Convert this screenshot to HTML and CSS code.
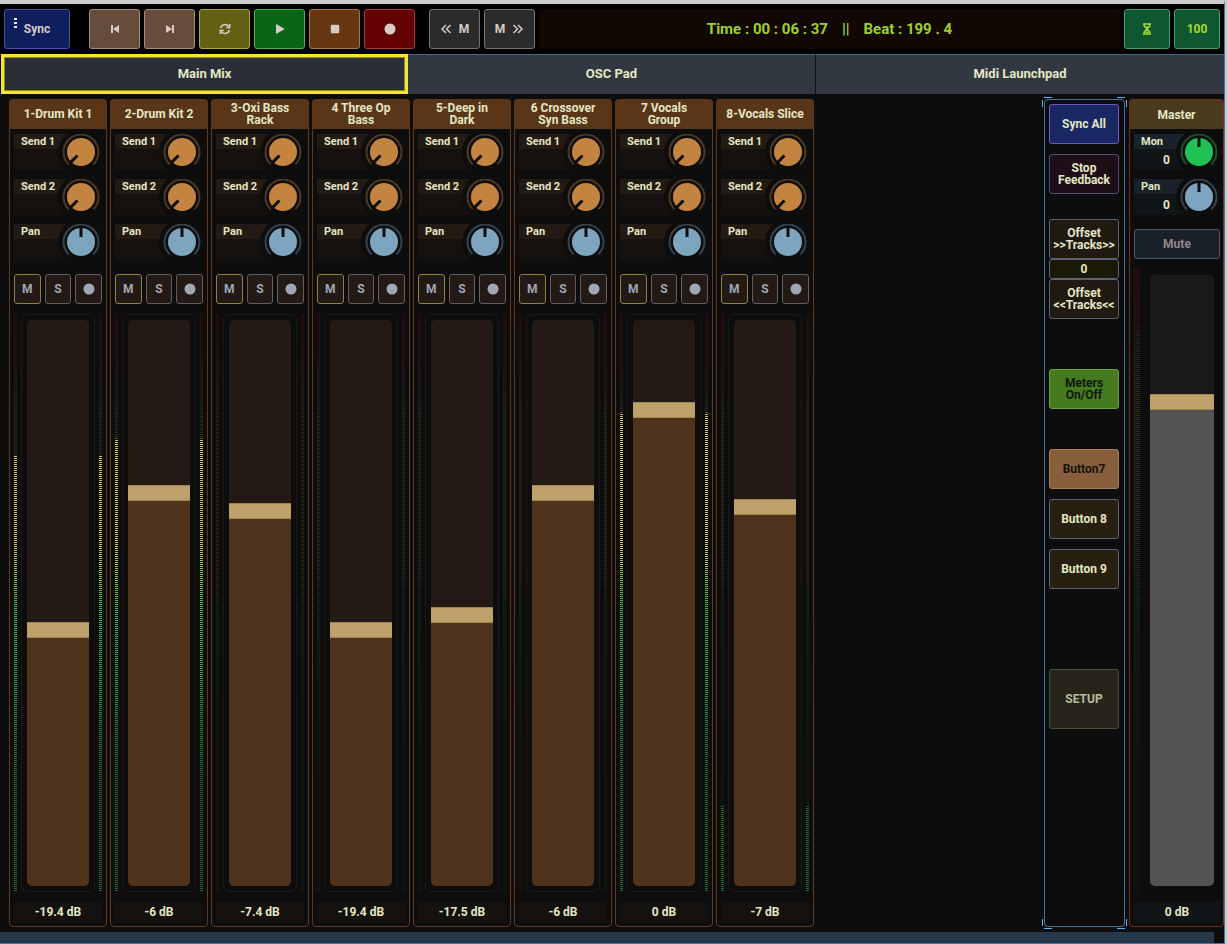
FILE: index.html
```html
<!DOCTYPE html>
<html lang="en">
<head>
<meta charset="utf-8">
<title>Main Mix</title>
<link rel="stylesheet" href="styles.css">
</head>
<body>
<div class="app">
  <header class="toolbar">
    <button class="btn sync"><svg class="dots" viewBox="0 0 3 11" aria-hidden="true"><path d="M0 0h3v2H0zM0 4h3v2H0zM0 8h3v2H0z"/></svg>Sync</button>
    <div class="group">
      <button class="btn nav" aria-label="Previous"><svg class="icon" viewBox="0 0 12 12"><path d="M2 2h2v8H2zM10 2v8L4 6z"/></svg></button>
      <button class="btn nav" aria-label="Next"><svg class="icon" viewBox="0 0 12 12"><path d="M8 2h2v8H8zM2 2v8l6-4z"/></svg></button>
      <button class="btn loop" aria-label="Loop"><svg class="icon line" viewBox="0 0 12 12"><path d="M1.6 5.2A4.5 4.5 0 0 1 9.6 3.3M10.7 1v3.4H7.3M10.4 6.8A4.5 4.5 0 0 1 2.4 8.7M1.3 11V7.6h3.4"/></svg></button>
      <button class="btn play" aria-label="Play"><svg class="icon" viewBox="0 0 12 12"><path d="M2 1.6Q2 1 2.6 1.3L10 5.6q.7.4 0 .8L2.6 10.700Q2 11 2 10.400z"/></svg></button>
      <button class="btn stop" aria-label="Stop"><svg class="icon" viewBox="0 0 12 12"><rect x="1.800" y="1.800" width="8.400" height="8.400" rx="1"/></svg></button>
      <button class="btn record" aria-label="Record"><svg class="icon" viewBox="0 0 12 12"><circle cx="6" cy="6" r="5.500"/></svg></button>
    </div>
    <div class="group">
      <button class="btn marker" aria-label="Previous marker"><svg class="icon line" viewBox="0 0 12 12"><path d="M6 2 2 6l4 4M10.500 2l-4 4 4 4"/></svg>M</button>
      <button class="btn marker" aria-label="Next marker">M<svg class="icon line" viewBox="0 0 12 12"><path d="m1.500 2 4 4-4 4M6 2l4 4-4 4"/></svg></button>
    </div>
    <div class="clock"><span>Time : 00 : 06 : 37</span><span>||</span><span>Beat : 199 . 4</span></div>
    <button class="btn tempo" aria-label="Latency"><svg class="icon line" viewBox="0 0 12 12"><path d="M2 1h8M2 11h8M3.200 1v2L6 6l2.800-3V1M3.200 11V9L6 6l2.800 3v2"/><path d="m4 3.500 2 2 2-2zM4 10l2-2 2 2z" fill="currentColor" stroke="none"/></svg></button>
    <button class="btn tempo">100</button>
  </header>
  <nav class="tabs">
    <button class="tab active">Main Mix</button>
    <button class="tab">OSC Pad</button>
    <button class="tab">Midi Launchpad</button>
  </nav>
  <main class="mixer">
    <div class="tracks" id="tracks"></div>
    <aside class="side">
      <i class="corner tl"></i><i class="corner tr"></i><i class="corner bl"></i><i class="corner br"></i>
      <button class="btn sync-all">Sync All</button>
      <button class="btn feedback">Stop<br>Feedback</button>
      <div class="offsets">
        <button class="btn offset">Offset<br>&gt;&gt;Tracks&gt;&gt;</button>
        <output class="offset-value">0</output>
        <button class="btn offset">Offset<br>&lt;&lt;Tracks&lt;&lt;</button>
      </div>
      <button class="btn meters-toggle">Meters<br>On/Off</button>
      <div class="customs">
        <button class="btn custom-on">Button7</button>
        <button class="btn custom">Button 8</button>
        <button class="btn custom">Button 9</button>
      </div>
      <button class="btn setup">SETUP</button>
    </aside>
    <section class="strip master" id="master"></section>
  </main>
  <footer class="scrollbar"></footer>
</div>
<script src="app.js"></script>
</body>
</html>
```
FILE: styles.css
```css
* { box-sizing: border-box; }
body {
  margin: 0;
  background: #c9c9cb;
  color: #e3e7c3;
  font: 700 11px/11px Roboto, "Liberation Sans", sans-serif;
}
button { font: inherit; color: inherit; padding: 0; margin: 0; }
svg { display: block; flex: none; }

.app {
  display: flex;
  flex-direction: column;
  height: 100vh;
  margin-right: 2px;
  border-top: 4px solid #cbcbcb;
  border-right: 1px solid #4b7298;
  border-bottom: 1px solid #4b7298;
  background: #0d0d0d;
}

.btn {
  display: flex;
  align-items: center;
  justify-content: center;
  text-align: center;
  height: 40px;
  border: 1px solid;
  border-radius: 3px;
}
.icon { width: 12px; height: 12px; fill: currentColor; }
.line { fill: none; stroke: currentColor; stroke-width: 1.5; }

.toolbar {
  display: flex;
  gap: 4px;
  height: 50px;
  padding: 5px 4px;
  background: #000;
  color: #d7cbc6;
  font-size: 12px;
}
.toolbar .btn { width: 51px; }
.toolbar .sync {
  position: relative;
  width: 66px;
  margin-right: 15px;
  background: #0f1e5d;
  border-color: #4c5196;
}
.dots { position: absolute; left: 9px; top: 8px; width: 3px; height: 11px; fill: #e8eaf0; }
.group { display: flex; gap: 4px; margin-right: 10px; }
.group + .group { margin-right: 0; }
.nav { background: #654c3b; border-color: #a58d7b; }
.loop { background: #636013; border-color: #aaa548; }
.play { background: #0a6517; border-color: #4dae54; }
.stop { background: #673711; border-color: #a87648; }
.record { background: #640103; border-color: #a83b3d; }
.marker { gap: 7px; background: #2b2b2b; border-color: #737373; }
.clock {
  flex: 1;
  display: flex;
  align-items: center;
  justify-content: center;
  gap: 14px;
  background: #110803;
  color: #9fd032;
  font-size: 15px;
}
.toolbar .tempo { width: 46px; background: #0f572e; border-color: #4b9a6c; color: #a5d936; }

.tabs { display: grid; grid-template-columns: repeat(3, 1fr); height: 40px; }
.tab {
  padding-bottom: 2px;
  border: 0;
  border-top: 1px solid #40688a;
  border-right: 1px solid #111;
  background: #323842;
  font-size: 13px;
}
.tab:last-child { border-right: 0; }
.tab.active {
  margin-left: 1px;
  border: 3px solid #f5e532;
  outline: 1px solid #8f8a2a;
  outline-offset: -4px;
  background: #2b2e38;
}

.mixer {
  flex: 1;
  display: flex;
  gap: 4px;
  min-height: 0;
  padding: 5px 0 5px 9px;
}
.tracks { flex: 1; display: flex; gap: 3px; }

.strip {
  display: flex;
  flex-direction: column;
  width: 98px;
  padding: 0 4px 4px;
  border: 1px solid #63391c;
  border-radius: 4px;
}
.strip-title {
  display: flex;
  align-items: center;
  justify-content: center;
  height: 30px;
  margin: -1px -5px 5px;
  border-radius: 4px 4px 0 0;
  background: #593519;
  font-size: 12px;
  line-height: 12px;
  text-align: center;
}
.knob-row {
  position: relative;
  display: flex;
  height: 36px;
  margin-bottom: 9px;
  background: linear-gradient(#231a14 15px, #15110e 15px);
}
.knob-text {
  flex: 1;
  display: flex;
  flex-direction: column;
  gap: 8px;
  min-width: 0;
  padding: 2px 16px 0 7px;
  white-space: nowrap;
}
.knob-value { align-self: flex-end; font-size: 12px; }
.knob { width: 44px; height: 36px; margin-left: -10px; }
.knob-input { position: absolute; inset: 0; width: 100%; margin: 0; opacity: 0; }
.well { fill: #0d0d0d; }
.ring { fill: none; stroke: #50371f; stroke-width: 2; }
.dial { fill: #c38442; }
.pointer { stroke: #0d0d0d; stroke-width: 3; }
.blue .ring { stroke: #34434e; }
.blue .dial { fill: #7da5c0; }
.green .ring { stroke: #17502a; }
.green .dial { fill: #20c155; }

.switches { display: grid; grid-template-columns: repeat(3, 1fr); gap: 4px; margin: 5px 0 10px; }
.switch { height: 30px; background: #231a16; border-color: #665d5c; color: #a0a7b4; font-size: 12px; }
.switch.mute { border-color: #8b8142; }

.fader-area { flex: 1; display: flex; justify-content: space-between; min-height: 0; }
.meter {
  position: relative;
  width: 3px;
  background: linear-gradient(#3c0b10, #30150f 7%, #2c2018 12%, #2c2c1c 18%, #2b2d1c 42%, #14291b 52%, #101a12 80%);
  mask-image: repeating-linear-gradient(#000 0 1px, transparent 1px 2px);
}
.meter-level {
  height: 100%;
  background: linear-gradient(#d03030, #dba436 14%, #d6c94e 20%, #cfca48 40%, #3ec04a 51%, #2faa40 62%, #226a2b 80%);
}
.fader-frame { width: 74px; padding: 5px; border: 1px solid #211813; border-radius: 6px; }
.fader {
  appearance: none;
  display: block;
  writing-mode: vertical-lr;
  direction: rtl;
  width: 100%;
  height: 100%;
  margin: 0;
  border-radius: 5px;
  background: linear-gradient(to top, #50331d var(--level), #231a15 var(--level));
}
.fader::-webkit-slider-runnable-track { width: 100%; height: 100%; }
.fader::-webkit-slider-thumb {
  appearance: none;
  width: 100%;
  height: 16px;
  border: solid #a18450;
  border-width: 1px 0;
  background: #bea06a;
}
.level-text {
  display: block;
  height: 20px;
  margin-top: 10px;
  background: #15110e;
  font-size: 12px;
  line-height: 20px;
  text-align: center;
}

.side {
  position: relative;
  width: 81px;
  padding: 4px 5px 4px 4px;
  border: 1px solid #41729f;
  border-radius: 4px;
}
.side .btn { width: 100%; margin-bottom: 10px; font-size: 12px; line-height: 12px; border-color: #596172; }
.side .sync-all { background: #192763; border-color: #7754bd; }
.side .feedback { background: #1d0e17; border-color: #554d75; margin-bottom: 25px; }
.offsets { margin-bottom: 50px; }
.side .offset { margin: 0; background: #211a13; }
.offset-value {
  display: block;
  height: 20px;
  border: 1px solid #596172;
  border-radius: 3px;
  background: #1c1807;
  font-size: 12px;
  line-height: 18px;
  text-align: center;
}
.side .meters-toggle { margin-bottom: 40px; background: #457a1e; border-color: #63a037; color: #10180c; }
.customs { margin-bottom: 80px; }
.side .custom-on { background: #885f3c; border-color: #a97c58; color: #19120c; }
.side .custom { background: #272011; }
.side .setup { height: 60px; background: #27251a; border-color: #405338; color: #b9bda0; }
.corner { position: absolute; width: 10px; height: 8px; }
.corner::before, .corner::after { content: ""; position: absolute; background: #64afef; }
.corner::before { width: 8px; height: 1px; }
.corner::after { width: 1px; height: 7px; }
.tl { left: -3px; top: -3px; }
.tr { right: -3px; top: -3px; }
.bl { left: -3px; bottom: -3px; }
.br { right: -3px; bottom: -3px; }
.tl::before, .bl::before { right: 0; }
.tl::after, .bl::after { left: 0; }
.tr::before, .br::before { left: 0; }
.tr::after, .br::after { right: 0; }
.tl::before, .tr::before { top: 0; }
.tl::after, .tr::after { top: 3px; }
.bl::before, .br::before { bottom: 0; }
.bl::after, .br::after { bottom: 3px; }

.master { width: 95px; padding-right: 3px; border-color: #703020; }
.master .strip-title { background: #4b3a1b; margin-right: -4px; border: 1px solid #703020; border-bottom: 0; }
.master .knob-row { background: linear-gradient(#19212a 15px, #101518 15px); }
.master .mute-all {
  height: 30px;
  margin: 5px 0 10px;
  background: #19202a;
  border-color: #565a5e;
  color: #938587;
  font-size: 12px;
}
.master .meter { width: 6px; }
.master .fader-frame { width: 76px; border-color: transparent; }
.master .fader { background: linear-gradient(to top, #535353 var(--level), #191919 var(--level)); }
.master .level-text { background: #101518; }

.scrollbar { height: 11px; margin-right: 10px; background: #263749; }
```
FILE: app.js
```js
const tracks = [
  { name: "1-Drum Kit 1", db: "-19.4 dB", level: 45.1, meter: 75.6 },
  { name: "2-Drum Kit 2", db: "-6 dB", level: 70, meter: 78.4 },
  { name: "3-Oxi Bass\nRack", db: "-7.4 dB", level: 66.7, meter: 0 },
  { name: "4 Three Op\nBass", db: "-19.4 dB", level: 45.1, meter: 0 },
  { name: "5-Deep in\nDark", db: "-17.5 dB", level: 47.8, meter: 0 },
  { name: "6 Crossover\nSyn Bass", db: "-6 dB", level: 70, meter: 0 },
  { name: "7 Vocals\nGroup", db: "0 dB", level: 85.1, meter: 82.9 },
  { name: "8-Vocals Slice", db: "-7 dB", level: 67.5, meter: 15 }
];

const knob = (owner, label, tone, angle, value) => `
  <label class="knob-row ${tone}">
    <span class="knob-text"><span>${label}</span>${value === undefined ? "" : `<span class="knob-value">${value}</span>`}</span>
    <svg class="knob" viewBox="0 0 44 36" aria-hidden="true">
      <circle class="well" cx="23" cy="18" r="23"/><rect class="well" x="23" width="21" height="36"/>
      <path class="ring" d="M10.600 30.400A17.500 17.500 0 1 1 35.400 30.400"/>
      <circle class="dial" cx="23" cy="18" r="14"/>
      <path class="pointer" d="M23 13V3" transform="rotate(${angle} 23 18)"/>
    </svg>
    <input class="knob-input" type="range" value="${angle ? 0 : 50}" aria-label="${owner} ${label}">
  </label>`;

const meter = (level) =>
  `<div class="meter"><div class="meter-level" style="clip-path: inset(${100 - level}% 0 0)"></div></div>`;

const fader = (name, level) =>
  `<div class="fader-frame"><input class="fader" type="range" min="0" max="100" step="0.1" value="${level}" style="--level: ${level}%" aria-label="${name} level"></div>`;

const strip = (t) => {
  const label = t.name.replace("\n", " ");
  return `
  <section class="strip">
    <div class="strip-title">${t.name.replace("\n", "<br>")}</div>
    ${knob(label, "Send 1", "", -135)}
    ${knob(label, "Send 2", "", -135)}
    ${knob(label, "Pan", "blue", 0)}
    <div class="switches">
      <button class="btn switch mute">M</button>
      <button class="btn switch">S</button>
      <button class="btn switch" aria-label="Record arm"><svg class="icon" viewBox="0 0 12 12"><circle cx="6" cy="6" r="5.500"/></svg></button>
    </div>
    <div class="fader-area">${meter(t.meter)}${fader(label, t.level)}${meter(t.meter)}</div>
    <output class="level-text">${t.db}</output>
  </section>`;
};

document.getElementById("tracks").innerHTML = tracks.map(strip).join("");

document.getElementById("master").innerHTML = `
  <div class="strip-title">Master</div>
  ${knob("Master", "Mon", "green", 0, 0)}
  ${knob("Master", "Pan", "blue", 0, 0)}
  <button class="btn mute-all">Mute</button>
  <div class="fader-area">${meter(0)}${fader("Master", 80)}</div>
  <output class="level-text">0 dB</output>`;

document.querySelectorAll(".fader").forEach((el) => {
  el.addEventListener("input", () => el.style.setProperty("--level", `${el.value}%`));
});
```
